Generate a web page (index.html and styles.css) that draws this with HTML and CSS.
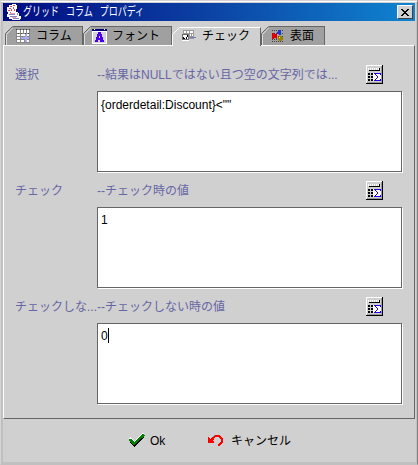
FILE: index.html
```html
<!DOCTYPE html>
<html lang="ja">
<head>
<meta charset="utf-8">
<title>グリッド コラム プロパディ</title>
<link rel="stylesheet" href="styles.css">
</head>
<body>
<svg class="defs" width="0" height="0" shape-rendering="crispEdges">
  <symbol id="calc" viewBox="0 0 17 19">
    <path fill="#d0d0d0" d="M0 0h17v19H0z"/>
    <path fill="#fff" d="M0 0h16v1H1v17H0z"/>
    <path fill="#000" d="M16 0h1v19H0v-1h16z"/>
    <path fill="#999" d="M15 1h1v17H1v-1h14z"/>
    <path fill="#fff" d="M2 3h1v2H2zm2 0h1v2H4zm2 0h1v2H6zm2 0h1v2H8zm2 0h1v2h-1zm2 0h1v2h-1zM7 8h8v8H7z"/>
    <path fill="#000" d="M13 3h1v3H3V5h10zM2 8h2v2H2zm3 0h2v2H5zM2 11h2v2H2zm3 0h2v2H5zM2 14h2v2H2zm3 0h2v2H5z"/>
    <path fill="#2200ee" d="M8 8h7v2h-1V9h-4v1h1v1h1v2h-1v1h-1v1h4v-1h1v2H8v-1h1v-1h1v-1h1v-2h-1v-1H9V9H8z"/>
  </symbol>
</svg>
<div class="window">
  <header class="titlebar">
    <svg class="app-icon" width="17" height="17" viewBox="0 0 17 17" shape-rendering="crispEdges">
      <path fill="#fff" d="M4 1h3V0h4v1h1v4h-1v3h2v1h1v3h2v3h-1v1H7v-1H4v-2H2v-3h1V8H2V3h2z"/>
      <path fill="#e8485a" d="M5 2h2v1H5zm3-1h2v1H8zM4 4h2v1H4zm4-1h1v2H8zM3 6h2v1H3zm3-1h1v2H6zm3 0h1v2H9zM5 8h1v1H5z"/>
      <path fill="#8884c8" d="M4 10h6v1H4zm8-1h1v2h-1zM5 12h7v1H5zm3 2h6v1H8z"/>
      <path fill="#e9a0b8" d="M5 9h5v1H5zm2 4h4v1H7z"/>
    </svg>
    <span class="title">グリッド&nbsp; コラム&nbsp; プロパディ</span>
    <button class="close" aria-label="閉じる"><svg width="8" height="7" viewBox="0 0 8 7" shape-rendering="crispEdges"><path d="M0 0h2v1h1v1h2V1h1V0h2v1H7v1H6v1H5v1h1v1h1v1h1v1H6V6H5V5H3v1H2v1H0V6h1V5h1V4h1V3H2V2H1V1H0z"/></svg></button>
  </header>
  <nav class="tabs">
    <div class="tab t1"><svg class="edge" viewBox="0 0 8 19" width="8" height="19"><path fill="#d0d0d0" d="M0 0h8L1 8v11H0z"/><path fill="none" stroke="#666" d="M.5 19V7.500L7.500.5"/><path fill="none" stroke="#ddd" d="M1.500 19V8.500L8 1.500"/></svg>
      <svg width="15" height="15" viewBox="0 0 15 15" shape-rendering="crispEdges"><path fill="#888" d="M0 0h14v14H0z"/><path fill="#fff" d="M1 1h3v3H1zm4 0h2v3H5zm3 0h2v3H8zm3 0h2v3h-2zM1 5h3v2H1zm0 3h3v2H1zm0 3h3v2H1zm4-6h4v2H5zm0 6h3v2H5zm4 0h4v2H9zm2-6h2v2h-2z"/><path fill="#444" d="M0 0h1v1H0zm4 0h1v1H4zm3 0h1v1H7zm3 0h1v1h-1zm3 0h1v1h-1zM2 4h1v1H2zm3 0h1v1H5zm4 0h1v1H9zm3 0h1v1h-1z"/><path fill="#aaaaf0" d="M5 8h8v2H5zm4-3h2v8H9z"/></svg><span>コラム</span></div>
    <div class="tab t2"><svg class="edge" viewBox="0 0 8 19" width="8" height="19"><path fill="#d0d0d0" d="M0 0h8L1 8v11H0z"/><path fill="none" stroke="#666" d="M.5 19V7.500L7.500.5"/><path fill="none" stroke="#ddd" d="M1.500 19V8.500L8 1.500"/></svg>
      <svg width="15" height="15" viewBox="0 0 15 15" shape-rendering="crispEdges"><path fill="#000080" d="M0 0h15v2H0z"/><path fill="#fff" d="M0 2h15v13H0zM2 0h1v1H2zm10 0h1v1h-1z"/><path fill="#d5d5d5" d="M1 3h13v11H1z"/><path fill="#4a00ee" d="M6 3h3v2h1v3h1v3h1v2H8v-2H6v2H3v-2h1V8h1V5h1zm1 4v2h1V7z"/></svg><span>フォント</span></div>
    <div class="tab t3 active"><svg class="edge" viewBox="0 0 8 19" width="8" height="19"><path fill="#d0d0d0" d="M0 0h8L1 8v11H0z"/><path fill="none" stroke="#fff" d="M.5 19V7.500L7.500.5"/></svg>
      <svg width="15" height="15" viewBox="0 0 15 15" shape-rendering="crispEdges"><path fill="#999" d="M1 1h11v9H1z"/><path fill="#fff" d="M2 2h2v2H2zm3 0h2v2H5zm3 0h3v2H8zm0 3h1v2H8zm2 0h1v2h-1zM0 5h7v7H0z"/><path fill="#666" d="M0 5h6v1H1v5H0z"/><path fill="#000" d="M5 6h1v2H5zM4 8h1v2H4zM1 8h1v1h1v1h1v1H2v-1H1z"/><path fill="#777" d="M6 5h1v6H0v-1h6z"/><path fill="#7777bb" d="M8 8h6v1H8z"/></svg><span>チェック</span></div>
    <div class="tab t4"><svg class="edge" viewBox="0 0 8 19" width="8" height="19"><path fill="#d0d0d0" d="M0 0h8L1 8v11H0z"/><path fill="none" stroke="#666" d="M.5 19V7.500L7.500.5"/><path fill="none" stroke="#ddd" d="M1.500 19V8.500L8 1.500"/></svg>
      <svg width="14" height="14" viewBox="0 0 14 14" shape-rendering="crispEdges"><path stroke="#444" stroke-dasharray="1 1" d="M1 1.500h12M1 4.500h12M1 7.500h12M1 10.500h12M1 12.500h12"/><path fill="#e00000" d="M1 4h2v1h2V4h1v6H5V9H3v1H1z"/><path fill="#1637d8" d="M7 1h3v5H8V5H6V3h1z"/><path fill="#968500" d="M8 7h3v1h1v3h-1v1H8v-1H7V8h1z"/><path fill="#ffee22" d="M8 8h1v1H8z"/></svg><span>表面</span></div>
  </nav>
  <main class="panel">
    <section class="field">
      <div class="row"><span class="name">選択</span><span class="desc">--結果はNULLではない且つ空の文字列では...</span><svg class="calc" width="17" height="19"><use href="#calc"/></svg></div>
      <div class="box">{orderdetail:Discount}&lt;""</div>
    </section>
    <section class="field">
      <div class="row"><span class="name">チェック</span><span class="desc">--チェック時の値</span><svg class="calc" width="17" height="19"><use href="#calc"/></svg></div>
      <div class="box up">1</div>
    </section>
    <section class="field">
      <div class="row"><span class="name">チェックしな...</span><span class="desc">--チェックしない時の値</span><svg class="calc" width="17" height="19"><use href="#calc"/></svg></div>
      <div class="box up">0<i class="caret"></i></div>
    </section>
  </main>
  <footer class="actions">
    <div class="action ok"><svg width="18" height="15" viewBox="0 0 18 15" shape-rendering="crispEdges"><path fill="#fff" d="M0 6l2-2 4 4 8-8h2l-10 11z"/><path fill="#000" d="M2 9l4 5L16 4l-1-1-9 9-3-4z"/><path fill="#008000" d="M1 6h2l3 3 7-7 2-1 2 2-3 2-8 7-5-4z"/></svg><span>Ok</span></div>
    <div class="action cancel"><svg width="16" height="13" viewBox="0 0 16 13" shape-rendering="crispEdges"><path fill="red" d="M0 3h1v1h1v1h1V4h1V3h1v2h1v1H5v1h1v2H0z"/><path fill="none" stroke="#888" d="M5 2.500l2-1h4"/><path fill="none" stroke="red" stroke-width="1.500" d="M4 5l4-3h3l3 3v3l-3 3h-1"/></svg><span>キャンセル</span></div>
  </footer>
</div>
</body>
</html>
```
FILE: styles.css
```css
* { box-sizing: border-box; }
body {
  margin: 0;
  width: 418px;
  height: 465px;
  overflow: hidden;
  background: #c0c0c0;
  font: 12px/16px "Liberation Sans", "Noto Sans CJK JP", sans-serif;
  color: #000;
}
.defs { position: absolute; }
span { white-space: nowrap; }
.window {
  width: 418px;
  height: 465px;
  display: flex;
  flex-direction: column;
  padding: 2px 2px 2px 2px;
  background: #d0d0d0;
  border: 1px solid;
  border-color: #d4d4d4 #808080 #c0c0c0 #d4d4d4;
  box-shadow: inset 0 1px #fff, inset 2px 0 #c0c0c0, inset -1px -2px #c0c0c0;
}
.titlebar {
  height: 18px;
  flex: none;
  display: flex;
  align-items: center;
  padding: 0 2px;
  background: linear-gradient(90deg, #000b82, #0b3ca0 45%, #1084d0);
  color: #fff;
}
.app-icon { flex: none; }
.title { margin-left: 1px; width: 300px; word-spacing: 1.3px; transform: scaleX(.75); transform-origin: 0 50%; }
.close {
  width: 16px;
  height: 14px;
  margin-left: auto;
  padding: 0;
  display: flex;
  align-items: center;
  justify-content: center;
  background: #d0d0d0;
  border: 1px solid;
  border-color: #fff #404040 #404040 #fff;
}
.tabs { height: 24px; flex: none; display: flex; align-items: flex-end; padding-left: 2px; }
.tab {
  position: relative;
  height: 19px;
  display: flex;
  align-items: center;
  padding-left: 11px;
  background: #a0a0a0;
  border-top: 1px solid #666;
  border-right: 1px solid #666;
}
.edge { position: absolute; left: 0; top: -1px; }
.tab span { margin-left: 5px; }
.t1 { width: 78px; }
.t2 { width: 89px; padding-left: 9px; }
.t3 { width: 89px; padding-left: 10px; }
.t4 { width: 64px; padding-left: 10px; }
.tab.active { margin-bottom: -1px; padding-bottom: 2px; background: #d0d0d0; border-top-color: #fff; z-index: 1; }
.panel {
  height: 374px;
  flex: none;
  padding: 18px 0 0 11px;
  border: 1px solid;
  border-color: #fff #666 #666 #fff;
}
.field { height: 116px; }
.row { display: flex; height: 27px; color: #6666a4; }
.row > span { line-height: 22px; }
.name { width: 82px; flex: none; overflow: hidden; }
.desc { width: 269px; flex: none; }
.calc { display: block; margin-top: 1px; }
.box {
  width: 305px;
  height: 81px;
  margin-left: 82px;
  padding: 5px 3px;
  background: #fff;
  border: 1px solid #666;
  box-shadow: 1px 1px #fff;
}
.box.up { padding-top: 4px; }
.caret { display: inline-block; width: 1px; height: 15px; background: #000; vertical-align: -3px; }
.actions { flex: 1; display: flex; align-items: center; }
.action { display: flex; align-items: center; }
.ok { margin-left: 125px; width: 80px; }
.ok span { margin-left: 4px; }
.cancel span { margin-left: 7px; }
```
